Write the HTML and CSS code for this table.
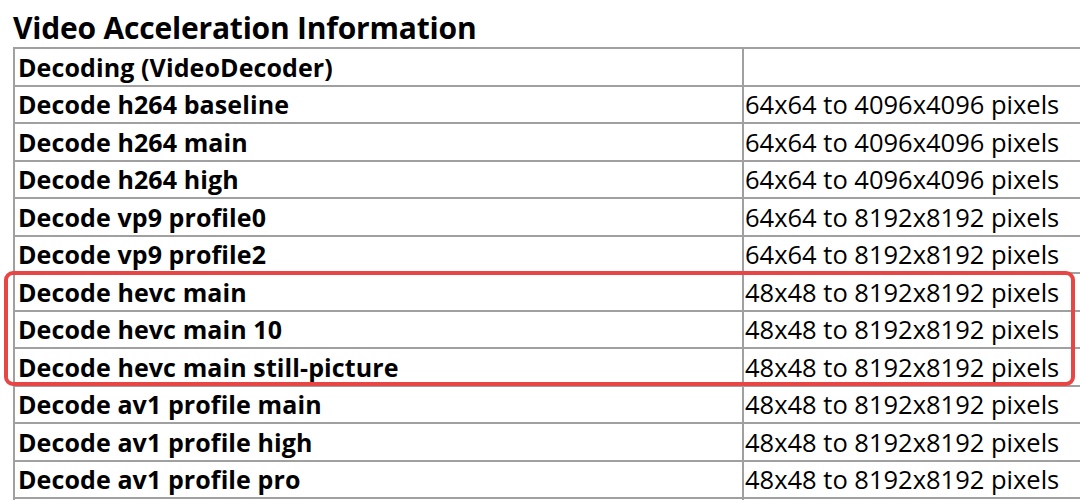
FILE: index.html
```html
<!DOCTYPE html>
<html>
<head>
<meta charset="utf-8">
<link rel="stylesheet" href="styles.css">
</head>
<body>
<div class="page">
  <h2 class="title">Video Acceleration Information</h2>
  <div class="table-wrap">
    <table class="info">
      <colgroup><col class="c1"><col class="c2"></colgroup>
      <tr><td class="k">Decoding (VideoDecoder)</td><td class="v"></td></tr>
      <tr><td class="k">Decode h264 baseline</td><td class="v">64x64 to 4096x4096 pixels</td></tr>
      <tr><td class="k">Decode h264 main</td><td class="v">64x64 to 4096x4096 pixels</td></tr>
      <tr><td class="k">Decode h264 high</td><td class="v">64x64 to 4096x4096 pixels</td></tr>
      <tr><td class="k">Decode vp9 profile0</td><td class="v">64x64 to 8192x8192 pixels</td></tr>
      <tr><td class="k">Decode vp9 profile2</td><td class="v">64x64 to 8192x8192 pixels</td></tr>
      <tr><td class="k">Decode hevc main</td><td class="v">48x48 to 8192x8192 pixels</td></tr>
      <tr><td class="k">Decode hevc main 10</td><td class="v">48x48 to 8192x8192 pixels</td></tr>
      <tr><td class="k">Decode hevc main still-picture</td><td class="v">48x48 to 8192x8192 pixels</td></tr>
      <tr><td class="k">Decode av1 profile main</td><td class="v">48x48 to 8192x8192 pixels</td></tr>
      <tr><td class="k">Decode av1 profile high</td><td class="v">48x48 to 8192x8192 pixels</td></tr>
      <tr><td class="k">Decode av1 profile pro</td><td class="v">48x48 to 8192x8192 pixels</td></tr>
      <tr><td class="k">&nbsp;</td><td class="v">&nbsp;</td></tr>
    </table>
    <div class="highlight"></div>
  </div>
</div>
</body>
</html>
```
FILE: styles.css
```css
html, body {
  margin: 0;
  padding: 0;
  background: #fff;
}
body {
  font-family: "Open Sans", "Noto Sans", sans-serif;
  color: #000;
}
.page {
  padding-left: 13px;
  width: 1080px;
  height: 500px;
  box-sizing: border-box;
  overflow: hidden;
}
.title {
  margin: 0;
  padding-top: 8px;
  font-size: 30px;
  line-height: 40px;
  font-weight: 700;
  letter-spacing: -0.2px;
  height: 39px;
}
.table-wrap {
  position: relative;
}
.info {
  border-collapse: collapse;
  width: 1067px;
  table-layout: fixed;
}
.c1 { width: 729px; }
.info td {
  border: 2px solid #a0a0a0;
  height: 37.5px;
  box-sizing: border-box;
  padding: 0 3px;
  font-size: 25px;
  line-height: 30px;
  white-space: nowrap;
  overflow: hidden;
  vertical-align: middle;
}
.info td.k { font-weight: 700; letter-spacing: 0.1px; }
.info td.v {
  font-weight: 400;
  padding-left: 1px;
  border-right: none;
  font-size: 25.5px;
}
.highlight {
  position: absolute;
  left: -9px;
  top: 224px;
  width: 1071px;
  height: 115px;
  border: 4px solid #e84545;
  border-radius: 9px;
  box-sizing: border-box;
}
```
